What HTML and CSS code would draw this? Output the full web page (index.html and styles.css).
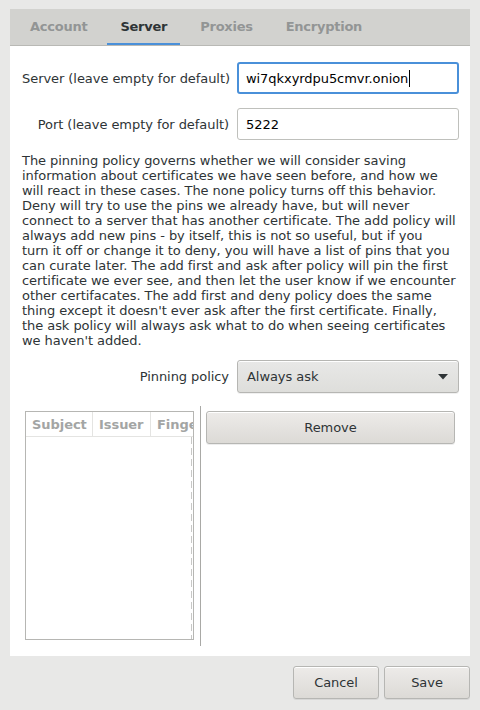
FILE: index.html
```html
<!DOCTYPE html>
<html>
<head>
<meta charset="utf-8">
<link rel="stylesheet" href="styles.css">
</head>
<body>
<div class="dialog">
  <div class="notebook">
    <div class="tabs">
      <div class="tab">Account</div>
      <div class="tab active">Server</div>
      <div class="tab">Proxies</div>
      <div class="tab">Encryption</div>
    </div>
    <div class="page">
      <div class="form">
        <label class="label">Server (leave empty for default)</label>
        <div class="entry focused"><span>wi7qkxyrdpu5cmvr.onion</span><span class="caret"></span></div>
        <label class="label">Port (leave empty for default)</label>
        <div class="entry"><span>5222</span></div>
      </div>
      <p class="info">The pinning policy governs whether we will consider saving<br>information about certificates we have seen before, and how we<br>will react in these cases. The none policy turns off this behavior.<br>Deny will try to use the pins we already have, but will never<br>connect to a server that has another certificate. The add policy will<br>always add new pins - by itself, this is not so useful, but if you<br>turn it off or change it to deny, you will have a list of pins that you<br>can curate later. The add first and ask after policy will pin the first<br>certificate we ever see, and then let the user know if we encounter<br>other certifacates. The add first and deny policy does the same<br>thing except it doesn't ever ask after the first certificate. Finally,<br>the ask policy will always ask what to do when seeing certificates<br>we haven't added.</p>
      <div class="policy">
        <label class="label">Pinning policy</label>
        <div class="combo">
          <span>Always ask</span>
          <svg class="arrow" width="10" height="6" viewBox="0 0 10 6"><path d="M0 0 H10 L5 5.5 Z" fill="#2e3436"/></svg>
        </div>
      </div>
      <div class="panes">
        <div class="left-pane">
          <div class="tree">
            <div class="tree-head">
              <div class="col c1">Subject</div>
              <div class="col c2">Issuer</div>
              <div class="col c3">Finge</div>
            </div>
            <div class="tree-body"><div class="guide"></div></div>
          </div>
        </div>
        <div class="handle"></div>
        <div class="right-pane">
          <button class="btn remove">Remove</button>
        </div>
      </div>
    </div>
  </div>
  <div class="actions">
    <button class="btn action">Cancel</button>
    <button class="btn action">Save</button>
  </div>
</div>
</body>
</html>
```

FILE: styles.css
```css
* { box-sizing: border-box; }
html, body {
  margin: 0;
  padding: 0;
  background: #e8e8e7;
  font-family: "DejaVu Sans", sans-serif;
  font-size: 13px;
  letter-spacing: -0.06px;
  color: #2e3436;
}
.dialog {
  width: 480px;
  height: 710px;
  padding: 9px 10px 0 10px;
  display: flex;
  flex-direction: column;
}
.notebook {
  background: #ffffff;
  height: 647px;
  display: flex;
  flex-direction: column;
}
.tabs {
  height: 37px;
  background: #d2d2cf;
  border-bottom: 1px solid #b9b9b5;
  display: flex;
  gap: 7px;
  padding-left: 7px;
}
.tab {
  padding: 0 13px;
  font-weight: bold;
  letter-spacing: -0.25px;
  color: #929595;
  display: flex;
  align-items: center;
  height: 36px;
  padding-bottom: 1px;
}
.tab.active {
  color: #2e3436;
  box-shadow: inset 0 -2px 0 #4a90d9;
}
.page {
  padding: 16px 11px 0 12px;
  display: flex;
  flex-direction: column;
}
.form {
  display: grid;
  grid-template-columns: minmax(0, 1fr) 222px;
  column-gap: 8px;
  row-gap: 14px;
  align-items: center;
}
.label {
  text-align: right;
  white-space: nowrap;
}
.entry {
  height: 32px;
  border: 1px solid #bfc0bc;
  border-radius: 3px;
  padding: 0 8px;
  display: flex;
  align-items: center;
  color: #000000;
  background: #fff;
}
.entry.focused {
  border: 2px solid #4a90d9;
  padding: 0 7px;
}
.caret {
  display: inline-block;
  width: 1px;
  height: 17px;
  background: #000;
  margin-left: 1px;
}
.info {
  margin: 13px 0 0 0;
  line-height: 15px;
  white-space: nowrap;
}
.policy {
  margin-top: 12px;
  display: grid;
  grid-template-columns: minmax(0, 1fr) 222px;
  column-gap: 8px;
  align-items: center;
}
.combo {
  height: 33px;
  border: 1px solid #b6b6b3;
  border-radius: 3px;
  background: linear-gradient(#e8e8e7, #dededb);
  box-shadow: inset 0 1px #ffffff, 0 1px rgba(0,0,0,0.06);
  display: flex;
  align-items: center;
  justify-content: space-between;
  padding: 0 10px 0 9px;
}
.arrow { margin-top: 1px; }
.panes {
  margin-top: 13px;
  display: flex;
  height: 240px;
}
.left-pane {
  width: 175px;
  padding: 5px 3px 6px 3px;
}
.tree {
  height: 229px;
  border: 1px solid #b6b6b3;
  display: flex;
  flex-direction: column;
  overflow: hidden;
}
.tree-head {
  height: 25px;
  display: flex;
  border-bottom: 1px solid #e4e4e2;
  flex: none;
}
.col {
  font-weight: bold;
  color: #a3a5a4;
  padding-left: 6px;
  display: flex;
  align-items: center;
  white-space: nowrap;
  overflow: hidden;
}
.c1 { width: 67px; border-right: 1px solid #e4e4e2; }
.c2 { width: 58px; border-right: 1px solid #e4e4e2; }
.c3 { flex: 1; }
.tree-body {
  flex: 1;
  position: relative;
}
.guide {
  position: absolute;
  right: 1px;
  top: 0;
  bottom: 0;
  width: 1px;
  background: repeating-linear-gradient(#c8c8c6 0 7px, transparent 7px 11px);
}
.handle {
  width: 1px;
  background: #a9a9a6;
  margin-left: 3px;
  margin-right: 5px;
}
.right-pane {
  width: 249px;
  padding-top: 5px;
}
.btn {
  font-family: "DejaVu Sans", sans-serif;
  font-size: 13px;
  letter-spacing: -0.06px;
  color: #2e3436;
  border: 1px solid #b6b6b3;
  border-radius: 3px;
  background: linear-gradient(#edebe9, #dcdad6);
  box-shadow: inset 0 1px #ffffff, 0 1px rgba(0,0,0,0.07);
  padding: 0;
  display: flex;
  align-items: center;
  justify-content: center;
}
.remove {
  width: 249px;
  height: 33px;
}
.actions {
  display: flex;
  justify-content: flex-end;
  gap: 5px;
  padding-top: 10px;
}
.action {
  width: 86px;
  height: 33px;
}
```
